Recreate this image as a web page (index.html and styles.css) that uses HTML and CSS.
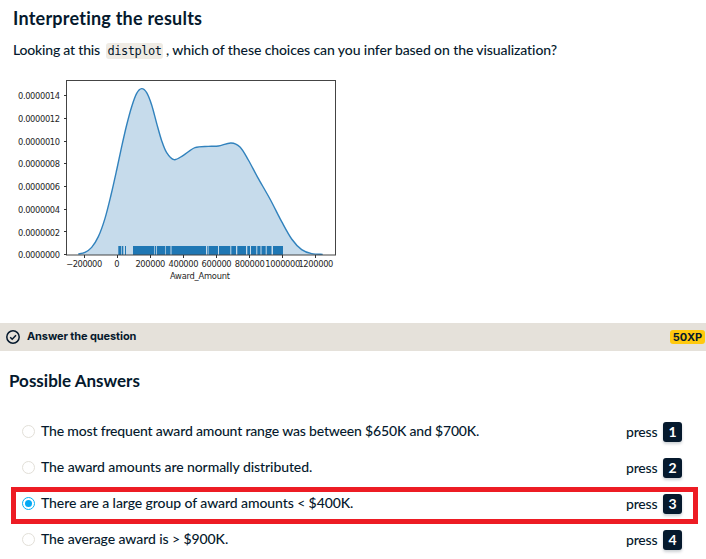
FILE: index.html
```html
<!DOCTYPE html>
<html lang="en">
<head>
<meta charset="utf-8">
<title>Interpreting the results</title>
<link rel="stylesheet" href="styles.css">
</head>
<body>
<main>
  <section class="context">
    <h1>Interpreting the results</h1>
    <p class="prompt"><span class="prompt-start">Looking at this</span><code>distplot</code><span class="prompt-end">, which of these choices can you infer based on the visualization?</span></p>
    <svg class="chart" width="340" height="215" viewBox="0 75 340 215">
      <path id="area" class="area"/>
      <path id="curve" class="curve"/>
      <g id="rug" class="rug"></g>
      <rect class="frame" x="66.5" y="80.5" width="269" height="174.5"/>
      <g id="axes" class="axes"></g>
      <text class="label" x="170" y="279" textLength="60">Award_Amount</text>
    </svg>
  </section>
  <header class="bar">
    <svg class="check" width="14" height="14" viewBox="0 0 14 14"><circle cx="7" cy="7" r="6.2"/><path d="M4.2 7.2 6.2 9.2 10 5.2"/></svg>
    <span class="bar-title">Answer the question</span>
    <span class="xp">50XP</span>
  </header>
  <section class="answers">
    <h2>Possible Answers</h2>
    <ul>
      <li><i class="radio"></i><span class="answer a1">The most frequent award amount range was between $650K and $700K.</span><span class="press">press</span><kbd>1</kbd></li>
      <li><i class="radio"></i><span class="answer">The award amounts are normally distributed.</span><span class="press">press</span><kbd>2</kbd></li>
      <li class="marked"><i class="radio on"></i><span class="answer">There are a large group of award amounts &lt; $400K.</span><span class="press">press</span><kbd>3</kbd></li>
      <li><i class="radio"></i><span class="answer">The average award is &gt; $900K.</span><span class="press">press</span><kbd>4</kbd></li>
    </ul>
  </section>
</main>
<script src="chart.js"></script>
</body>
</html>
```
FILE: styles.css
```css
*, *::after { box-sizing: border-box; }
body { margin: 0; background: #fff; color: #05192d; font: 500 14px/20px Lato, "Liberation Sans", sans-serif; overflow: hidden; }
main { width: 706px; height: 559px; overflow: hidden; }
.context { height: 323px; padding-top: 7px; }
h1 { margin: 0 0 0 13px; font-size: 18px; line-height: 22px; font-weight: 700; letter-spacing: .23px; }
.prompt { display: flex; align-items: center; height: 20px; margin: 12px 0 14px 13px; white-space: nowrap; }
.prompt-start { width: 93px; letter-spacing: -.2px; }
.prompt-end { letter-spacing: -.09px; }
.prompt-start, .prompt-end { padding-bottom: 2px; }
code { width: 57px; height: 16px; margin-right: 3px; border-radius: 3px; background: #efebe4; font: 12px/16px "DejaVu Sans Mono", monospace; letter-spacing: -.5px; text-align: center; }
.chart { display: block; }
.area { fill: #c6dbeb; }
.curve { fill: none; stroke: #3182bd; stroke-width: 1.4; }
.rug { fill: #1f77b4; }
.frame { fill: none; stroke: #444; stroke-width: 1; }
.axes path { stroke: #333; stroke-width: 1; }
.axes text, .label { font: 8.3px "DejaVu Sans", sans-serif; fill: #262626; }
.bar { display: flex; align-items: center; height: 28px; padding: 0 1px 0 6px; background: #e5e1da; }
.check { fill: none; stroke: #05192d; stroke-width: 1.5; }
.bar-title { flex: 1; margin: -2px 0 0 7px; font: 700 11px/16px Inter, sans-serif; letter-spacing: -.1px; }
.xp { width: 35px; height: 14px; border-radius: 3px; background: #ffc90e; font: 700 11px/14px Inter, sans-serif; text-align: center; }
.answers { padding-top: 19px; }
h2 { margin: 0 0 0 9px; font-size: 17px; line-height: 22px; font-weight: 700; }
ul { margin: 21px 0 0; padding: 0; list-style: none; }
li { position: relative; display: flex; align-items: center; height: 36px; padding: 0 24px 0 22px; white-space: nowrap; }
.radio { width: 13px; height: 13px; margin-right: 6px; border: 1px solid #e2dfd8; border-radius: 50%; }
.radio.on { padding: 2px; border-color: #05b1f5; background: #05a9f4 content-box; }
.answer { flex: 1; letter-spacing: -.08px; }
.a1 { letter-spacing: -.17px; }
.press { width: 37px; padding-top: 1px; letter-spacing: -.2px; }
kbd { width: 19px; height: 20px; margin-top: 2px; border-radius: 3px; background: #05192d; color: #fff; box-shadow: 0 2px 3px #05192d33; font: 700 14px/20px Lato, sans-serif; text-align: center; }
.marked::after { content: ""; position: absolute; left: 11px; top: 2px; width: 687px; height: 37px; border: 5px solid #ed1c24; }
```
FILE: chart.js
```js
const points = [[10,522],[30,517],[50,502],[70,470],[90,415],[108,345],[125,270],[140,200],[155,135],[170,80],[185,40],[200,26],[215,38],[230,75],[245,130],[260,182],[275,218],[297,239],[325,226],[360,203],[400,199],[430,198],[468,189],[495,201],[520,240],[548,292],[585,357],[620,425],[650,477],[680,509],[710,521],[743,523]].map(([x, y]) => [75 + x / 3, 80 + y / 3]);
let d = `M${points[0]}`;
for (let i = 0; i < points.length - 1; i++) {
  const a = points[Math.max(i - 1, 0)], b = points[i], c = points[i + 1], e = points[Math.min(i + 2, points.length - 1)];
  d += `C${b[0] + (c[0] - a[0]) / 6},${b[1] + (c[1] - a[1]) / 6} ${c[0] - (e[0] - b[0]) / 6},${c[1] - (e[1] - b[1]) / 6} ${c}`;
}
document.getElementById("curve").setAttribute("d", d);
document.getElementById("area").setAttribute("d", d + "L322.7,255H78.3Z");

const rug = [[118.3,121.3],[122,123.3],[125,126],[133,154.3],[155,156],[156.8,165.3],[166,170.5],[171,171.5],[172,206],[207,207.7],[208.5,218],[219,230.3],[231.3,236],[237.3,246],[247.3,250],[251,256.3],[257.3,260.5],[261.5,265.7],[266.7,271.5],[273,283]];
document.getElementById("rug").innerHTML = rug.map(([a, b]) => `<rect x="${a}" y="246" width="${b - a}" height="9"/>`).join("");

let axes = "";
for (let i = 0; i < 8; i++) {
  const y = 255 - i * 22.7;
  axes += `<path d="M64 ${Math.round(y) - .5}h3"/><text x="18" y="${y + 3.2}" textLength="42">0.00000${String(i * 2).padStart(2, "0")}</text>`;
}
const widths = [36, 6, 30, 30, 30, 30, 35, 35];
for (let i = 0; i < 8; i++) {
  const x = 84.2 + i * 33.1, value = (i - 1) * 200000;
  axes += `<path d="M${Math.floor(x) + .5} 255v3"/><text x="${x - widths[i] / 2}" y="267" textLength="${widths[i]}">${String(value).replace("-", "−")}</text>`;
}
document.getElementById("axes").innerHTML = axes;
```
